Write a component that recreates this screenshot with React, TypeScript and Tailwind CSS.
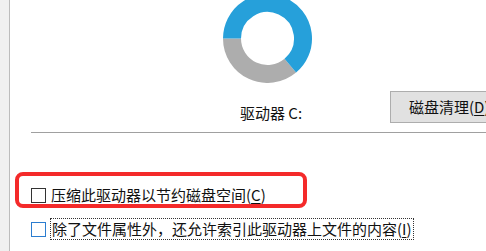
import React from "react";

const font = { fontFamily: '"Noto Sans CJK SC", "Noto Sans", sans-serif' };

function Donut() {
  // used (blue) runs from 9 o'clock clockwise to ~140deg, free (gray) the rest
  return (
    <svg width="91" height="83" viewBox="0 0 91 83" className="block">
      <path d="M 68.3 65.7 A 35.5 35.5 0 0 1 10 38.5" fill="none" stroke="#adadad" strokeWidth="18" />
      <path d="M 10 38.5 A 35.5 35.5 0 1 1 68.3 65.7" fill="none" stroke="#26a0da" strokeWidth="18" />
    </svg>
  );
}

function Check({ tone }: { tone: "dark" | "blue" }) {
  return (
    <div
      className={`w-[15px] h-[15px] shrink-0 bg-white border ${tone === "blue" ? "border-[#2b7dd0]" : "border-[#333333]"}`}
    />
  );
}

export default function App() {
  return (
    <div className="w-[486px] h-[251px] overflow-hidden flex bg-white text-[#111111]" style={font}>
      <div className="w-[10px] shrink-0 bg-[#f0f0f0] border-r border-[#bcbcbc]" />

      <div className="flex-1 flex flex-col min-w-0">
        <div className="ml-[212px]">
          <Donut />
        </div>

        <div className="flex mt-[8px] h-[32px]">
          <div className="ml-[230px] w-[150px] shrink-0 mt-[12px] text-[15px] leading-[20px]">驱动器 C:</div>
          <div className="w-[110px] shrink-0 h-[32px] border border-[#adadad] bg-[#e1e1e1] pl-[18px] flex items-center text-[15px] leading-[20px] whitespace-nowrap">
            磁盘清理(<span className="underline underline-offset-2">D</span>)
          </div>
        </div>

        <div className="mt-[9px] ml-[21px] h-px bg-[#a0a0a0]" />

        <div className="mt-[39px] ml-[5px] w-[292px] h-[36px] border-4 border-[#f42a2a] rounded-[8px] pl-[12px] flex items-start">
          <div className="mt-[12px]">
            <Check tone="dark" />
          </div>
          <div className="ml-[5px] mt-[9px] text-[15px] leading-[20px] whitespace-nowrap">
            压缩此驱动器以节约磁盘空间(<span className="underline underline-offset-2">C</span>)
          </div>
        </div>

        <div className="mt-[10px] ml-[21px] flex items-start">
          <div className="mt-[4px]">
            <Check tone="blue" />
          </div>
          <div className="ml-[4px] border border-dotted border-[#333333] px-[1px] text-[15px] leading-[20px] whitespace-nowrap">
            除了文件属性外，还允许索引此驱动器上文件的内容(<span className="underline underline-offset-2">I</span>)
          </div>
        </div>
      </div>
    </div>
  );
}
